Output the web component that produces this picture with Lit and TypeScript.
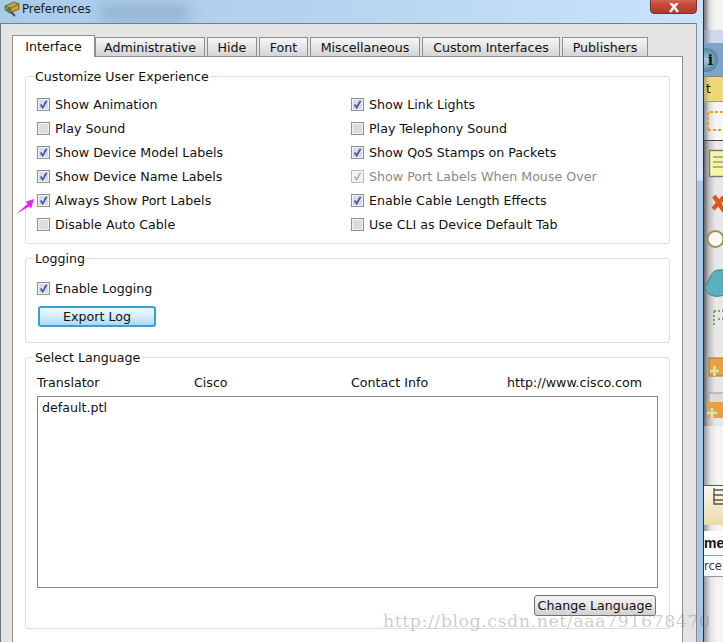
import { LitElement, html, css, svg } from "lit";
import { customElement } from "lit/decorators.js";

const left = [
  ["Show Animation", 1], ["Play Sound", 0], ["Show Device Model Labels", 1],
  ["Show Device Name Labels", 1], ["Always Show Port Labels", 1], ["Disable Auto Cable", 0],
];
const right = [
  ["Show Link Lights", 1], ["Play Telephony Sound", 0], ["Show QoS Stamps on Packets", 1],
  ["Show Port Labels When Mouse Over", 2], ["Enable Cable Length Effects", 1], ["Use CLI as Device Default Tab", 0],
];
const tabs = ["Administrative", "Hide", "Font", "Miscellaneous", "Custom Interfaces", "Publishers"];
const tabWidths = [110, 50, 49, 110, 138, 86];

@customElement("app-root")
export class AppRoot extends LitElement {
  static styles = css`
    :host { display: block; width: 723px; height: 642px; overflow: hidden; font-family: "DejaVu Sans", sans-serif; font-size: 12.65px; color: #111; }
    .screen { position: relative; width: 723px; height: 642px; display: flex; overflow: hidden; }
    .win { width: 703px; flex: none; display: flex; flex-direction: column; background: linear-gradient(#cfe3f7 0, #d4e6f8 180px, #a6c7ea 181px, #a6c7ea 100%); position: relative; }
    .title { height: 23px; flex: none; display: flex; align-items: center; padding-left: 3px; gap: 2px; font-size: 11.7px; position: relative; overflow: hidden; background: linear-gradient(90deg, #a9cbea 0%, #b4d2ee 40%, #c9e3fb 100%); }
    .title span { position: relative; top: -3px; color: #1a1a1a; }
    .title svg { position: relative; top: -3px; flex: none; }
    .blur { position: absolute; left: 100px; top: 6px; width: 90px; height: 14px; background: #7c9cbf; filter: blur(8px); opacity: .7; }
    .close { position: absolute; left: 650px; top: -8px; width: 47px; height: 22px; border: 1px solid #6b3a34; border-radius: 0 0 4px 4px; background: linear-gradient(#e8a090, #c8493a 55%, #b23a2c); display: flex; align-items: flex-end; justify-content: center; box-sizing: border-box; }
    .client { flex: 1; margin: 0 6px 0 0; background: #e4e4e4; border-top: 1px solid #70808f; border-left: 1px solid #6d7680; border-right: 1px solid #878b92; padding: 11px 13px 0 11px; display: flex; flex-direction: column; min-height: 0; position: relative; }
    .tabs { display: flex; height: 21px; align-items: flex-end; flex: none; gap: 2px; position: relative; z-index: 1; }
    .tab { box-sizing: border-box; height: 19px; border: 1px solid #8d8f92; border-bottom: none; background: linear-gradient(#f6f6f6, #d4d4d4); text-align: center; line-height: 19px; white-space: nowrap; }
    .tab.on { height: 22px; width: 83px; background: #fff; margin: 0 -2px -1px 0; line-height: 21px; }
    .pane { flex: 1; background: #fff; border: 1px solid #8d8f92; border-bottom: none; padding: 11px 12px 0 12px; display: flex; flex-direction: column; gap: 6px; }
    fieldset { margin: 0; padding: 0 11px; border: 1px solid #d6e0e8; border-radius: 3px; min-width: 0; box-sizing: border-box; flex: none; }
    legend { padding: 0 2px 0 1px; margin-left: -3px; line-height: 16px; position: relative; top: 1px; }
    .g1 { height: 176px; }
    .g2 { height: 93px; }
    .g3 { height: 280px; }
    .opts { display: grid; grid-template-columns: 314px 1fr; grid-auto-rows: 24px; margin-top: 8px; }
    .opt { display: flex; align-items: center; gap: 5px; white-space: nowrap; height: 24px; }
    .opt.dis { color: #8a8a8a; }
    .cb { flex: none; width: 13px; height: 13px; display: block; }
    .log { padding-top: 10px; }
    .btn-export { display: block; box-sizing: border-box; width: 118px; height: 21px; margin: 6px 0 0 1px; border: 2px solid #3c9fd0; border-radius: 3px; background: linear-gradient(#eaf6fd, #d6edfa 50%, #a9daf4); font: inherit; color: #111; padding: 0; }
    .hdr { display: grid; grid-template-columns: 157px 157px 156px 1fr; margin-top: 10px; line-height: 16px; white-space: nowrap; }
    .list { box-sizing: border-box; height: 192px; margin-top: 5px; border: 1px solid #858585; padding: 3px 4px; }
    .foot { display: flex; justify-content: flex-end; margin-top: 7px; padding-right: 2px; }
    .btn-lang { box-sizing: border-box; width: 122px; height: 21px; border: 1px solid #707070; border-radius: 3px; background: linear-gradient(#f4f4f4, #e6e6e6 50%, #cfcfcf); font: inherit; color: #111; padding: 0; }
    .app { flex: 1; position: relative; background: #f4f4f4; border-left: 1px solid #2a2f35; overflow: hidden; display: flex; flex-direction: column; }
    .a-top { height: 30px; background: linear-gradient(90deg, #777 0, #ddd 30%, #f4f4f4 60%); }
    .a-blue { height: 13px; background: linear-gradient(90deg, #8894a8 0, #cfd8ee 40%); }
    .a-info { height: 33px; background: #7fa2cb; display: flex; align-items: center; }
    .i { width: 24px; height: 24px; border-radius: 50%; margin-left: -10px; flex: none; background: radial-gradient(#a8cfe0, #2e6488); font: bold 14px "DejaVu Serif", serif; color: #111; display: flex; align-items: center; justify-content: flex-end; padding-right: 5px; box-sizing: border-box; }
    .a-yellow { height: 26px; background: linear-gradient(90deg, #b8a860 0, #f0d878 30%); font-size: 12px; line-height: 24px; padding-left: 2px; border-top: 1px solid #888; border-bottom: 1px solid #999; box-sizing: border-box; }
    .a-gap { height: 38px; background: linear-gradient(90deg, #888 0, #ddd 30%, #f6f6f6 60%); position: relative; border-bottom: 1px solid #444; }
    .a-tools { flex: 1; position: relative; background: linear-gradient(90deg, #666 0, #bbb 25%, #e8e8e8 60%); }
    .item { position: absolute; left: 0; top: 0; }
    .wm { position: absolute; left: 383px; top: 614px; font: 17.5px/14px "DejaVu Serif", serif; letter-spacing: .5px; color: rgba(120,120,120,.38); white-space: nowrap; pointer-events: none; }
    .arrow { position: absolute; left: 14px; top: 196px; pointer-events: none; }
    .lower { position: absolute; left: 0; top: 285px; right: 0; bottom: 0; background: linear-gradient(90deg, #999 0, #e4e4e4 35%, #f4f4f4 70%); }
    .note { position: absolute; left: 0; top: 59px; width: 19px; height: 40px; background: linear-gradient(#fbf8e8, #e8dca8); border-top: 1px solid #555; box-sizing: border-box; }
    .me { position: absolute; left: 0; top: 105px; width: 19px; height: 46px; overflow: hidden; background: #fff; border-bottom: 1px solid #999; box-sizing: border-box; }
    .metext { display: block; font: bold 14px "Liberation Sans", sans-serif; line-height: 25px; height: 25px; color: #111; border-bottom: 1px solid #b0a040; box-sizing: border-box; }
    .rc { display: block; font-size: 11.5px; line-height: 16px; padding-top: 2px; color: #333; white-space: nowrap; }
  `;

  private box(state: number) {
    const border = state === 2 ? "#bdbdbd" : "#8e8f8f";
    const fill = state === 2 ? "#f4f4f4" : "#d9dde2";
    return html`<svg class="cb" viewBox="0 0 13 13">
      <rect x=".5" y=".5" width="12" height="12" fill="#f2f2f2" stroke="${border}"/>
      <rect x="2" y="2" width="9" height="9" fill="${fill}"/>
      ${state ? svg`<path d="M3.5 6.5 L5.6 9.6 L9.6 2.8" fill="none" stroke="${state === 2 ? "#b0b0b0" : "#3f56b0"}" stroke-width="1.7"/>` : ""}
    </svg>`;
  }
  private opt(o: (string | number)[]) {
    return html`<div class="opt ${o[1] === 2 ? "dis" : ""}">${this.box(o[1] as number)}<span>${o[0]}</span></div>`;
  }

  render() {
    const rows = left.flatMap((l, i) => [l, right[i]]);
    return html`<div class="screen">
      <div class="win">
        <div class="title">
          <div class="blur"></div>
          <svg width="17" height="17" viewBox="0 0 17 17">
            <path d="M2 6 L11 2 L16 4 L16 9 L7 13 L2 10 Z" fill="#c9a23a" stroke="#5e4a1c" stroke-width=".8"/>
            <path d="M2 6 L7 8.5 L16 4 M7 8.5 V13" fill="none" stroke="#5e4a1c" stroke-width=".7"/>
            <circle cx="6" cy="9.5" r="2.4" fill="#3c8a3c"/>
            <path d="M8 12 L12 16" stroke="#444" stroke-width="1.8"/>
          </svg>
          <span>Preferences</span>
        </div>
        <div class="close"><svg width="14" height="10" viewBox="0 0 14 10"><path d="M3 -1 L11 9 M11 -1 L3 9" stroke="#f4f4f4" stroke-width="2.6"/></svg></div>
        <div class="client">
          <div class="tabs">
            <div class="tab on">Interface</div>
            ${tabs.map((t, i) => html`<div class="tab" style="width:${tabWidths[i]}px">${t}</div>`)}
          </div>
          <div class="pane">
            <fieldset class="g1">
              <legend>Customize User Experience</legend>
              <div class="opts">${rows.map((o) => this.opt(o))}</div>
            </fieldset>
            <fieldset class="g2">
              <legend>Logging</legend>
              <div class="log">
                ${this.opt(["Enable Logging", 1])}
                <button class="btn-export">Export Log</button>
              </div>
            </fieldset>
            <fieldset class="g3">
              <legend>Select Language</legend>
              <div class="hdr"><span>Translator</span><span>Cisco</span><span>Contact Info</span><span>http://www.cisco.com</span></div>
              <div class="list">default.ptl</div>
              <div class="foot"><button class="btn-lang">Change Language</button></div>
            </fieldset>
          </div>
        </div>
      </div>
      <div class="app">
        <div class="a-top"></div>
        <div class="a-blue"></div>
        <div class="a-info"><div class="i">i</div></div>
        <div class="a-yellow">t</div>
        <div class="a-gap">
          <svg class="item" style="left:3px;top:9px" width="17" height="21" viewBox="0 0 17 21"><path d="M1 19 V1 H17 M1 19 H17" fill="none" stroke="#e8a020" stroke-width="2" stroke-dasharray="3 2"/></svg>
        </div>
        <div class="a-tools">
          <svg class="item" width="19" height="285" viewBox="0 0 19 285">
            <rect x="5.5" y="9.5" width="16" height="26" fill="#f8f8a0" stroke="#777" stroke-width="1.4"/>
            <path d="M9 16 H20 M9 21 H20 M9 26 H20" stroke="#999" stroke-width="1.5"/>
            <path d="M10 55 L20 70 M9 68 L20 56" stroke="#e0561c" stroke-width="4.5"/>
            <circle cx="11.5" cy="98" r="8" fill="#f8f8f8" stroke="#b08a50" stroke-width="2"/>
            <path d="M1 146 C6 140 6 130 14 129 L20 129 L20 154 C12 157 2 155 1 146 Z" fill="#5bb0c0" stroke="#2f7f90"/>
            <path d="M10 170 V186 M10 170 H20 M14 178 H20" stroke="#7aa860" stroke-width="2" stroke-dasharray="2 2"/>
            <rect x="5" y="217" width="15" height="18" fill="#e8a040" stroke="#b07020"/>
            <path d="M6 230 H15 M10.5 225 V235" stroke="#d6e4a8" stroke-width="2.6"/>
            <rect x="5" y="252" width="15" height="10" fill="#dcdcdc" stroke="#999"/>
            <rect x="4" y="261" width="16" height="16" fill="#e8a040"/>
            <path d="M3 272 H13 M8 267 V278" stroke="#d6e4a8" stroke-width="2.6"/>
          </svg>
          <div class="lower">
            <div class="note"></div>
            <svg class="item" style="left:8px;top:60px" width="11" height="22" viewBox="0 0 11 22"><path d="M2 4 H11 M1 9 H11 M1 14 H11 M2 2 V18 H11" fill="none" stroke="#555" stroke-width="1.4"/></svg>
            <div class="me"><span class="metext">me</span><span class="rc">rce</span></div>
          </div>
        </div>
      </div>
      <svg class="arrow" width="22" height="20" viewBox="0 0 22 20"><path d="M20 3 L12 5.5 L13.5 8 L2 18 L15 10.5 L17 12.5 Z" fill="#ee22ee"/></svg>
      <div class="wm">http://blog.csdn.net/aaa791678470</div>
    </div>`;
  }
}
